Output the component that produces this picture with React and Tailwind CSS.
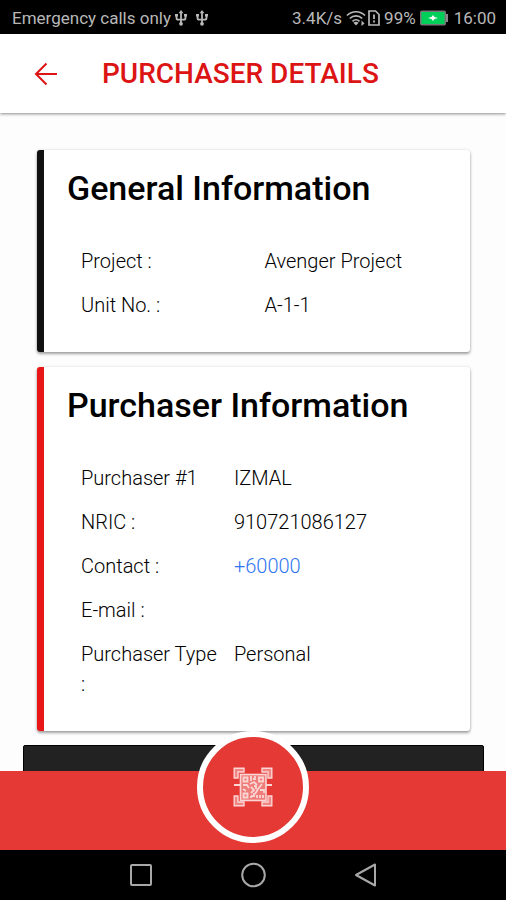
import React from "react";

function UsbIcon() {
  return (
    <svg className="h-4 w-3" viewBox="0 0 12 16" fill="none" stroke="currentColor" strokeWidth="1.800" aria-hidden="true">
      <path d="M6 2v12M1.500 5v3c0 1 .8 1.700 1.800 1.700H6M10.500 5v3c0 1-.8 1.700-1.800 1.700H6" />
      <path d="M6 0l2.400 3.200H3.600z" fill="currentColor" stroke="none" />
      <circle cx="6" cy="13.800" r="1.900" fill="currentColor" stroke="none" />
      <path d="M0 4h3v2.500H0zM9 4h3v2.500H9z" fill="currentColor" stroke="none" />
    </svg>
  );
}

function WifiIcon() {
  return (
    <svg className="h-4 w-5" viewBox="0 0 20 16" fill="none" stroke="currentColor" strokeWidth="1.700" aria-hidden="true">
      <path d="M1 5.500C6 .5 14 .5 19 5.500M3.800 8.500c3.500-3.400 8.900-3.400 12.400 0M6.500 11.300c2-2 5-2 7 0" />
      <path d="M10 15.500l-2.600-2.800c1.500-1.300 3.700-1.300 5.200 0z" fill="currentColor" stroke="none" />
      <path d="M15.500 10.500l3 3-3 2.500z" fill="currentColor" stroke="none" />
    </svg>
  );
}

function SimAlertIcon() {
  return (
    <svg className="h-4 w-3" viewBox="0 0 12 16" fill="none" stroke="currentColor" strokeWidth="1.700" aria-hidden="true">
      <path d="M1 1h6.500L11 4.500V15H1z" />
      <path d="M6 4.500v4.500M6 10.500v2" strokeWidth="1.800" />
    </svg>
  );
}

function BatteryIcon() {
  return (
    <svg className="h-4 w-7" viewBox="0 0 28 16" aria-hidden="true">
      <rect x="0.750" y="1.250" width="24.500" height="13.500" rx="1" fill="#00d05a" stroke="#77777a" strokeWidth="1.500" />
      <rect x="26" y="4" width="2" height="8" fill="#8a8a8a" />
      <path d="M8 8l3.500-1L13 5l1.500 2L18 8l-3.500 1L13 11l-1.500-2z" fill="#fff" />
    </svg>
  );
}

function BackArrow() {
  return (
    <svg className="h-6 w-6" viewBox="0 0 24 24" fill="none" stroke="currentColor" strokeWidth="2" aria-hidden="true">
      <path d="M23 12H2M12.500 1.500L2 12l10.500 10.500" />
    </svg>
  );
}

function QrScanIcon() {
  return (
    <svg className="h-10 w-10" viewBox="0 0 40 40" fill="none" stroke="#fbd5d3" aria-hidden="true">
      <g strokeWidth="1.400">
        <path d="M1.200 11V1.200H11V5H5v6zM29 1.200h9.800V11H35V5h-6zM1.200 29v9.800H11V35H5v-6zM38.800 29v9.800H29V35h6v-6z" fill="#f08683" />
        <path d="M1 18h6M33 18h6" strokeWidth="2.200" />
      </g>
      <rect x="7.500" y="7.500" width="25.500" height="26" fill="#ee7c79" strokeWidth="1.600" />
      <g strokeWidth="1.800">
        <path d="M10.500 10.500h4v4h-4zM26 10.500h4v4h-4zM10.500 26.500h4v4h-4z" />
        <path d="M18 9v5M22 9v3h-2M10 18h4l2 3M17 17l4-2 3 3M29 17l-4 5-3 5M18 20l3 3-3 3M10 22l3 2M27 23h4v3M18 29h3v-3M24 28v3M27 28v3M30 28v3M18 31v-2M21 19h2v3" />
      </g>
    </svg>
  );
}

function StatusBar() {
  return (
    <div className="flex h-[34px] shrink-0 items-center justify-between bg-black pt-0.5 pr-[10px] pl-3 text-[17px] leading-6 text-[#b8b8b8]">
      <div className="flex items-center">
        <span>Emergency calls only</span>
        <span className="ml-1 flex gap-[9px]">
          <UsbIcon />
          <UsbIcon />
        </span>
      </div>
      <div className="flex items-center">
        <span>3.4K/s</span>
        <span className="ml-1 flex gap-0.5">
          <WifiIcon />
          <SimAlertIcon />
        </span>
        <span className="ml-1">99%</span>
        <span className="ml-1">
          <BatteryIcon />
        </span>
        <span className="ml-1.5">16:00</span>
      </div>
    </div>
  );
}

const general = [
  { label: "Project :", value: "Avenger Project" },
  { label: "Unit No. :", value: "A-1-1" },
];

const purchaser = [
  { label: "Purchaser #1", value: "IZMAL" },
  { label: "NRIC :", value: "910721086127" },
  { label: "Contact :", value: "+60000", href: "tel:+60000" },
  { label: "E-mail :", value: "" },
  { label: "Purchaser Type :", value: "Personal" },
];

function InfoCard({ title, rows, accent, labelSpan, valueSpan }) {
  return (
    <section
      className={`rounded-[3px] border-l-[7px] bg-white pt-4 pb-[25px] shadow-[0_2px_3px_rgba(0,0,0,0.35),0_0_3px_rgba(0,0,0,0.12)] ${accent}`}
    >
      <h2 className="px-[23px] text-[34px] leading-[44px] font-medium text-black">{title}</h2>
      <dl className="mt-[29px] pr-[28px] pl-[31px] text-xl leading-[30px] font-light text-black">
        {rows.map((row) => (
          <div key={row.label} className="grid grid-cols-12 py-[7px]">
            <dt className={`px-1.5 ${labelSpan}`}>{row.label}</dt>
            <dd className={`px-1.5 ${valueSpan}`}>
              {row.href ? (
                <a href={row.href} className="text-[#2f75f0]">
                  {row.value}
                </a>
              ) : (
                row.value
              )}
            </dd>
          </div>
        ))}
      </dl>
    </section>
  );
}

function NavBar() {
  return (
    <nav className="flex h-[50px] shrink-0 items-center justify-center gap-[86px] bg-black text-[#a8a8a8]">
      <button type="button" aria-label="Recent apps">
        <svg className="h-[26px] w-[26px]" viewBox="0 0 26 26" fill="none" stroke="currentColor" strokeWidth="2">
          <rect x="3" y="3" width="20" height="20" rx="1" />
        </svg>
      </button>
      <button type="button" aria-label="Home">
        <svg className="h-[26px] w-[26px]" viewBox="0 0 26 26" fill="none" stroke="currentColor" strokeWidth="2">
          <circle cx="13.500" cy="13" r="11.300" />
        </svg>
      </button>
      <button type="button" aria-label="Back">
        <svg className="h-[26px] w-[26px]" viewBox="0 0 26 26" fill="none" stroke="currentColor" strokeWidth="2" strokeLinejoin="round">
          <path d="M23 2.500v21L4 13z" />
        </svg>
      </button>
    </nav>
  );
}

export default function App() {
  return (
    <div className="flex h-dvh flex-col overflow-hidden bg-[#fdfdfd] font-[Roboto,sans-serif]">
      <StatusBar />
      <header className="z-10 flex h-[79px] shrink-0 items-center bg-white pl-[34px] text-[#dc1414] shadow-[0_1px_3px_rgba(0,0,0,0.45)]">
        <button type="button" aria-label="Back">
          <BackArrow />
        </button>
        <h1 className="ml-11 text-[28px] leading-9 font-medium">PURCHASER DETAILS</h1>
      </header>
      <main className="min-h-0 flex-1 overflow-hidden pt-[37px] pr-[22px] pl-[23px]">
        <div className="flex flex-col gap-[15px] px-[14px]">
          <InfoCard
            title="General Information"
            rows={general}
            accent="border-[#111111]"
            labelSpan="col-span-6"
            valueSpan="col-span-6"
          />
          <InfoCard
            title="Purchaser Information"
            rows={purchaser}
            accent="border-[#e81616]"
            labelSpan="col-span-5"
            valueSpan="col-span-7"
          />
        </div>
        <div className="mt-[14px] h-16 rounded-[2px] border border-black bg-[#222222]" />
      </main>
      <footer className="relative h-[79px] shrink-0 bg-[#e53935]">
        <button
          type="button"
          aria-label="Scan QR code"
          className="absolute -top-10 left-1/2 flex h-28 w-28 -translate-x-1/2 items-center justify-center rounded-full border-[6px] border-white bg-[#e53935]"
        >
          <QrScanIcon />
        </button>
      </footer>
      <NavBar />
    </div>
  );
}
